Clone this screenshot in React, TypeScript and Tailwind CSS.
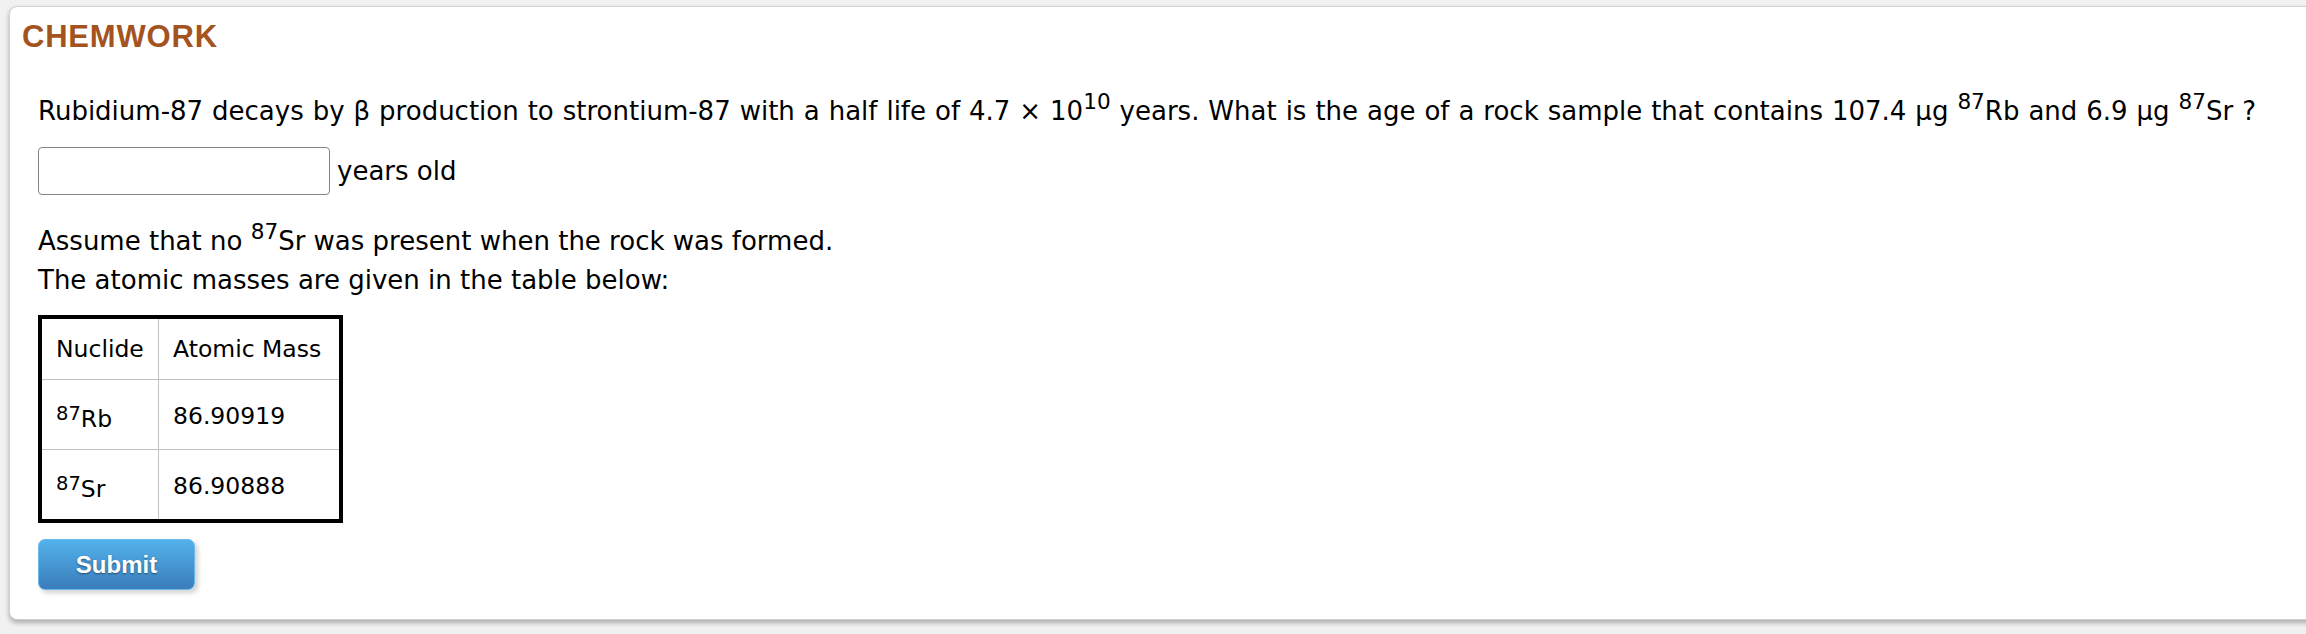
function Sup({ children }: { children: React.ReactNode }) {
  return <sup className="-top-[0.5em] text-[0.83em]">{children}</sup>;
}

function CellSup({ children }: { children: React.ReactNode }) {
  return <sup className="-top-[0.37em] text-[0.83em]">{children}</sup>;
}

export default function App() {
  return (
    <div className="h-[634px] w-[2306px] overflow-hidden bg-[#f1f1f1] pt-[6px] pl-[9px]">
      <div className="h-[614px] w-[2320px] rounded-[8px] border border-[#cfcfcf] bg-white pt-[12px] pl-[12px] shadow-[0_3px_5px_rgba(0,0,0,0.28)]">
        <h1 className="font-['Liberation_Sans',Arial,sans-serif] text-[31px] leading-[36px] font-bold tracking-[0.8px] text-[#a4531f]">
          CHEMWORK
        </h1>

        <div className="mt-[37px] pl-[16px] font-['DejaVu_Sans',Verdana,sans-serif] text-[26px] leading-[39px] text-black">
          <p className="whitespace-nowrap [word-spacing:0.7px]">
            Rubidium-87 decays by β production to strontium-87 with a half life of 4.7 × 10<Sup>10</Sup> years.
            What is the age of a rock sample that contains 107.4 μg <Sup>87</Sup>Rb and 6.9 μg <Sup>87</Sup>Sr ?
          </p>

          <div className="mt-[16px] flex items-center gap-[7px]">
            <input
              type="text"
              className="h-[48px] w-[292px] rounded-[4px] border border-[#858585] bg-white"
            />
            <span>years old</span>
          </div>

          <p className="mt-[27px]">
            Assume that no <Sup>87</Sup>Sr was present when the rock was formed.
            <br />
            The atomic masses are given in the table below:
          </p>

          <div className="mt-[15px] w-[305px] border-4 border-black text-[23.5px] leading-[28px]">
            <div className="grid grid-cols-[116px_180px] gap-px bg-[#c0c0c0]">
              <div className="flex h-[60px] items-center bg-white pl-[14px]">Nuclide</div>
              <div className="flex h-[60px] items-center bg-white pl-[14px]">Atomic Mass</div>
              <div className="flex h-[69px] items-center bg-white pt-[9px] pl-[14px]">
                <span>
                  <CellSup>87</CellSup>Rb
                </span>
              </div>
              <div className="flex h-[69px] items-center bg-white pt-[3px] pl-[14px]">86.90919</div>
              <div className="flex h-[69px] items-center bg-white pt-[9px] pl-[14px]">
                <span>
                  <CellSup>87</CellSup>Sr
                </span>
              </div>
              <div className="flex h-[69px] items-center bg-white pt-[3px] pl-[14px]">86.90888</div>
            </div>
          </div>

          <button
            type="button"
            className="mt-[16px] flex h-[51px] w-[157px] items-center justify-center rounded-[7px] border border-[#6bb8ea] bg-linear-to-b from-[#53b2eb] to-[#3a7dbb] font-['Liberation_Sans',Arial,sans-serif] text-[24px] leading-none font-bold text-white shadow-[3px_3px_5px_rgba(0,0,0,0.18)] [text-shadow:0_1px_2px_rgba(0,0,0,0.45)]"
          >
            Submit
          </button>
        </div>
      </div>
    </div>
  );
}
